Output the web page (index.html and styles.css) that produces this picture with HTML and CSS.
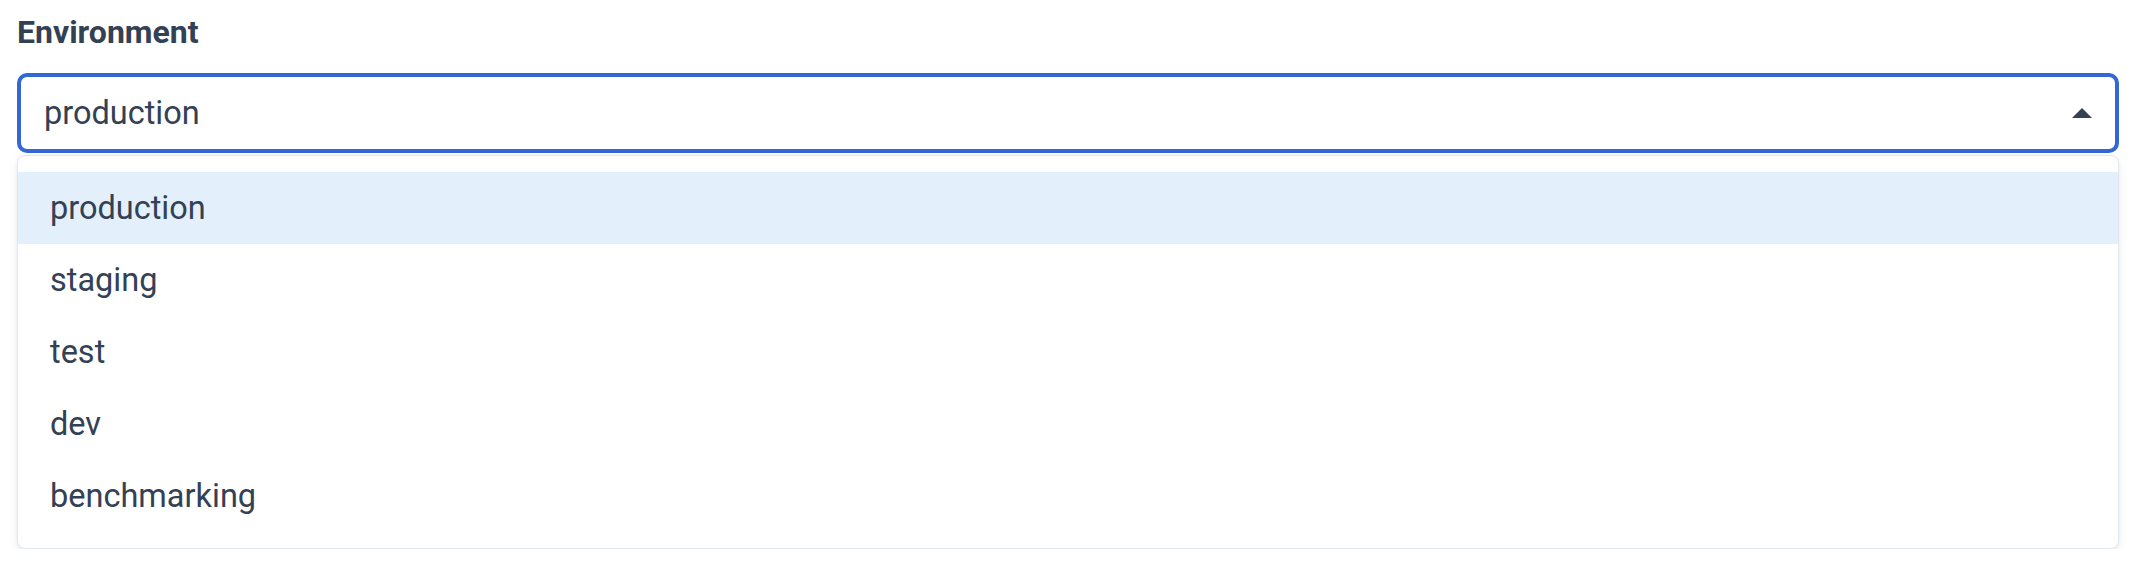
FILE: index.html
```html
<!DOCTYPE html>
<html lang="en">
<head>
<meta charset="utf-8">
<title>Environment</title>
<link rel="stylesheet" href="styles.css">
</head>
<body>
<div class="field">
  <label class="label">Environment</label>
  <div class="select">
    <span class="value">production</span>
    <svg class="caret" width="20" height="10" viewBox="0 0 20 10"><path d="M0 10 L10 0 L20 10 Z" fill="#334155"/></svg>
  </div>
  <ul class="menu">
    <li class="option active">production</li>
    <li class="option">staging</li>
    <li class="option">test</li>
    <li class="option">dev</li>
    <li class="option">benchmarking</li>
  </ul>
</div>
</body>
</html>
```
FILE: styles.css
```css
* { box-sizing: border-box; }
html, body { margin: 0; padding: 0; background: #ffffff; }
body {
  font-family: Roboto, "Liberation Sans", sans-serif;
  color: #334155;
}
.field {
  padding: 16px 13px 0 17px;
  display: flex;
  flex-direction: column;
}
.label {
  font-size: 32px;
  line-height: 32px;
  font-weight: 700;
  margin-bottom: 25px;
}
.select {
  height: 80px;
  border: 4px solid #3367d6;
  border-radius: 10px;
  display: flex;
  align-items: center;
  justify-content: space-between;
  padding: 0 23px 0 23px;
}
.value {
  font-size: 32.5px;
  line-height: 40px;
}
.caret { display: block; }
.menu {
  list-style: none;
  margin: 2px 0 0 0;
  padding: 16px 0 16px 0;
  border: 1px solid #e2e8f0;
  border-radius: 8px;
  box-shadow: 0 4px 12px rgba(15, 23, 42, 0.06), 0 1px 3px rgba(15, 23, 42, 0.06);
  background: #ffffff;
}
.option {
  height: 72px;
  display: flex;
  align-items: center;
  padding-left: 32px;
  font-size: 32.5px;
}
.option.active { background: #e3f0fc; }
```
